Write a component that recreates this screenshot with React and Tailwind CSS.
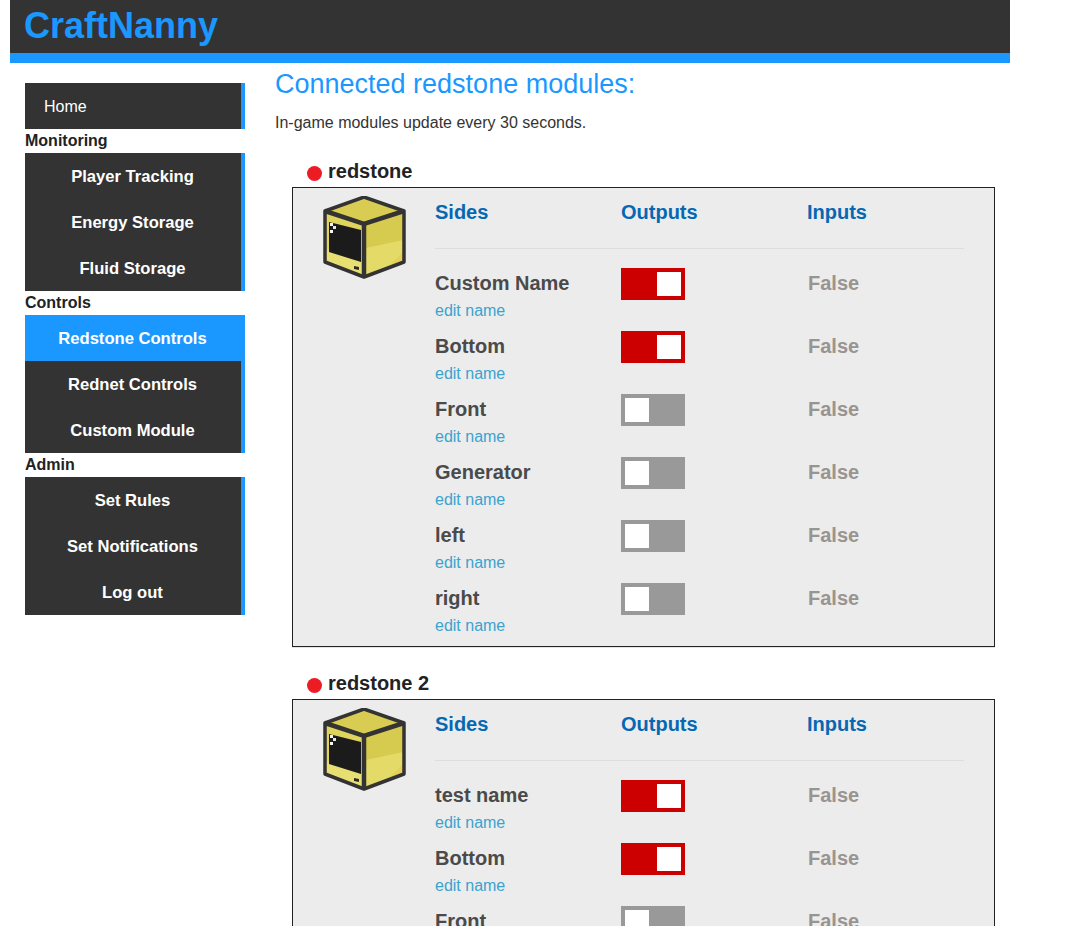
import React from 'react';

const CubeIcon = () => (
    <svg width="84" height="84" viewBox="0 0 84 84" className="block">
        {/* faces */}
        <polygon points="41,1 81,15 41,28 2,15" fill="#d8cd52" />
        <polygon points="2,15 41,28 41,81 2,66" fill="#dfd45e" />
        <polygon points="2,52 41,66 41,81 2,66" fill="#e8df72" />
        <polygon points="41,28 81,15 81,66 41,81" fill="#d6cb4e" />
        <polygon points="43,52 80,44 80,65 43,80" fill="#e3da68" />
        <polygon points="64,72 80,56 80,65" fill="#e4cf5a" />
        {/* screen */}
        <polygon points="6,26 38,34 38,66 6,56" fill="#1b1b1b" />
        <rect x="7" y="27" width="3" height="3" fill="#f4f4f4" />
        <rect x="10" y="30" width="3" height="3" fill="#e8e8e8" />
        <rect x="7" y="34" width="3" height="3" fill="#f4f4f4" />
        <polygon points="31,70 36,71 36,74 31,73" fill="#2b2b2b" />
        {/* outline */}
        <polygon points="41,1 81,15 81,66 41,81 2,66 2,15" fill="none" stroke="#333" strokeWidth="3.5" strokeLinejoin="round" />
        <polyline points="2,15 41,28 81,15" fill="none" stroke="#333" strokeWidth="4.5" />
        <line x1="41" y1="28" x2="41" y2="81" stroke="#333" strokeWidth="4.5" />
    </svg>
);

const Toggle = ({ on }) => (
    <div className={`flex h-8 w-16 p-1 ${on ? 'justify-end bg-[#cc0000]' : 'justify-start bg-[#999999]'}`}>
        <div className="h-6 w-6 bg-white" />
    </div>
);

const Row = ({ name, on }) => (
    <div className="grid h-[63px] grid-cols-[186px_186px_186px]">
        <div>
            <div className="mb-[2px] text-[20px] leading-[30px] font-bold text-[#4a4a4a]">{name}</div>
            <div className="text-[16px] leading-[22px] text-[#3aa3cf]">edit name</div>
        </div>
        <Toggle on={on} />
        <div className="pl-px text-[20px] leading-[30px] font-bold text-[#9a9490]">False</div>
    </div>
);

const Module = ({ title, rows }) => (
    <section className="mb-[20px] ml-[17px]">
        <div className="flex h-[32px] items-center pl-[15px]">
            <span className="mt-[4px] h-[15px] w-[15px] rounded-full bg-[#ed1c24]" />
            <span className="ml-[6px] text-[20px] font-bold text-[#222]">{title}</span>
        </div>
        <div className="flex h-[460px] w-[703px] border border-[#222] bg-[#ececec] pl-[30px] pt-[8px] shadow-[0_1px_0_#e4e4e4]">
            <div className="w-[112px] shrink-0">
                <CubeIcon />
            </div>
            <div>
                <div className="grid h-[52px] grid-cols-[186px_186px_186px] text-[20px] leading-[32px] font-bold text-[#0668b3]">
                    <div>Sides</div>
                    <div>Outputs</div>
                    <div>Inputs</div>
                </div>
                <div className="mb-[19px] h-px w-[529px] bg-[#dddddd]" />
                {rows.map(r => (
                    <Row key={r.name} name={r.name} on={r.on} />
                ))}
            </div>
        </div>
    </section>
);

const MenuGroup = ({ items, active }) => (
    <div className="border-r-4 border-[#1a98ff] bg-[#333333]">
        {items.map(item => (
            <div
                key={item}
                className={`-mr-1 h-[46px] pr-[5px] pt-[2px] text-center text-[16.6px] leading-[44px] font-bold text-white ${item === active ? 'bg-[#1a98ff]' : ''}`}
            >
                {item}
            </div>
        ))}
    </div>
);

const MenuLabel = ({ children }) => (
    <div className="h-[24px] text-[16px] leading-[24px] font-bold text-[#222]">{children}</div>
);

const firstRows = [
    { name: 'Custom Name', on: true },
    { name: 'Bottom', on: true },
    { name: 'Front', on: false },
    { name: 'Generator', on: false },
    { name: 'left', on: false },
    { name: 'right', on: false },
];

const secondRows = [
    { name: 'test name', on: true },
    { name: 'Bottom', on: true },
    { name: 'Front', on: false },
    { name: 'Generator', on: false },
    { name: 'left', on: false },
    { name: 'right', on: false },
];

export default function App() {
    return (
        <div className="h-[926px] overflow-hidden bg-white font-['Liberation_Sans',Arial,sans-serif]">
            <header className="ml-[10px] h-[63px] w-[1000px] border-b-[10px] border-[#1a98ff] bg-[#333333] pl-[14px]">
                <h1 className="text-[36px] leading-[51px] font-bold text-[#1a98ff]">CraftNanny</h1>
            </header>
            <div className="flex">
                <nav className="ml-[25px] mt-[20px] w-[220px] shrink-0">
                    <div className="h-[46px] border-r-4 border-[#1a98ff] bg-[#333333] pl-[19px] pt-[2px] text-[16px] leading-[44px] text-white">Home</div>
                    <MenuLabel>Monitoring</MenuLabel>
                    <MenuGroup items={['Player Tracking', 'Energy Storage', 'Fluid Storage']} />
                    <MenuLabel>Controls</MenuLabel>
                    <MenuGroup items={['Redstone Controls', 'Rednet Controls', 'Custom Module']} active="Redstone Controls" />
                    <MenuLabel>Admin</MenuLabel>
                    <MenuGroup items={['Set Rules', 'Set Notifications', 'Log out']} />
                </nav>
                <main className="ml-[30px] flex-1">
                    <h2 className="mt-[5px] text-[27px] leading-[32px] text-[#1a98ff]">Connected redstone modules:</h2>
                    <p className="mb-[21px] mt-[12px] text-[16px] leading-[22px] text-[#333]">In-game modules update every 30 seconds.</p>
                    <Module title="redstone" rows={firstRows} />
                    <Module title="redstone 2" rows={secondRows} />
                </main>
            </div>
        </div>
    );
}
